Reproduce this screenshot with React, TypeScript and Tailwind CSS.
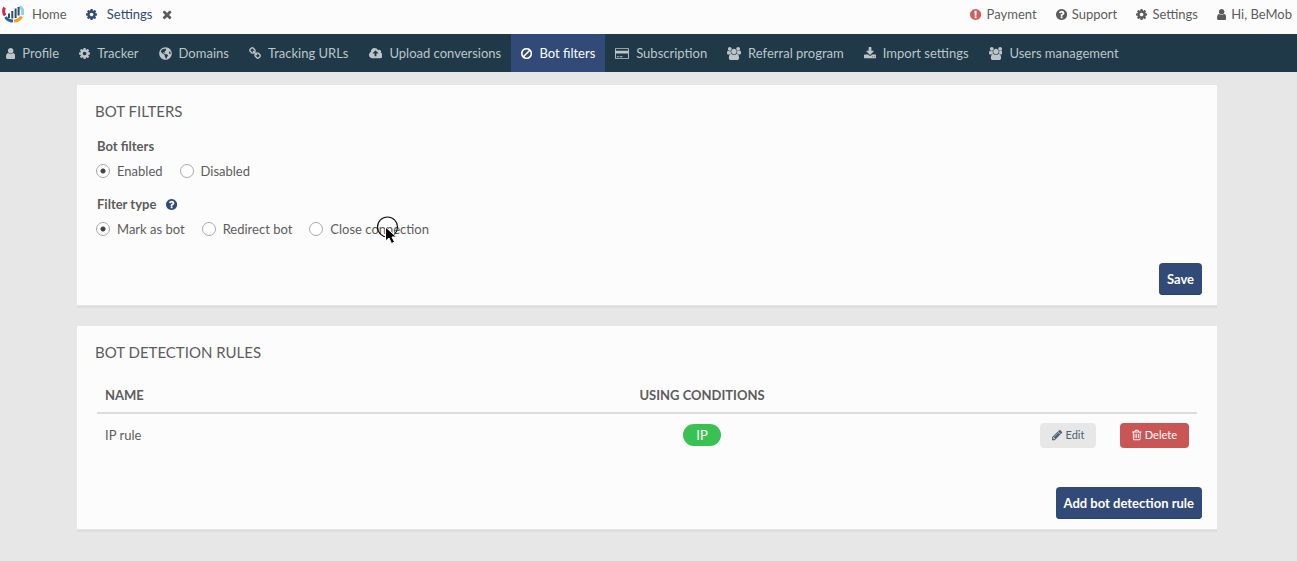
import { useState } from "react"
import type { ReactNode } from "react"
import { FaGlobeAmericas } from "react-icons/fa"

// Glyphs on a 1792-unit em: [viewBox, path]
const glyphs = {
  user: [
    "256 0 1280 1792",
    "M1536 1399q0 109-62.5 187t-150.5 78h-854q-88 0-150.5-78t-62.5-187q0-85 8.5-160.5t31.5-152 58.5-131 94-89 134.5-34.5q131 128 313 128t313-128q76 0 134.5 34.5t94 89 58.5 131 31.5 152 8.5 160.5zm-256-887q0 159-112.5 271.5t-271.5 112.5-271.5-112.5-112.5-271.5 112.5-271.5 271.5-112.5 271.5 112.5 112.5 271.5z",
  ],
  cog: [
    "128 0 1536 1792",
    "M1152 896q0-106-75-181t-181-75-181 75-75 181 75 181 181 75 181-75 75-181zm512-109v222q0 12-8 23t-20 13l-185 28q-19 54-39 91 35 50 107 138 10 12 10 25t-9 23q-27 37-99 108t-94 71q-12 0-26-9l-138-108q-44 23-91 38-16 136-29 186-7 28-36 28h-222q-14 0-24.5-8.5t-11.5-21.5l-28-184q-49-16-90-37l-141 107q-10 9-25 9-14 0-25-11-126-114-165-168-7-10-7-23 0-12 8-23 15-21 51-66.5t54-70.5q-27-50-41-99l-183-27q-13-2-21-12.5t-8-23.5v-222q0-12 8-23t19-13l186-28q14-46 39-92-40-57-107-138-10-12-10-24 0-10 9-23 26-36 98.5-107.5t94.5-71.5q13 0 26 10l138 107q44-23 91-38 16-136 29-186 7-28 36-28h222q14 0 24.5 8.5t11.5 21.5l28 184q49 16 90 37l142-107q9-9 24-9 13 0 25 10 129 119 165 170 7 8 7 22 0 12-8 23-15 21-51 66.5t-54 70.5q26 50 41 98l183 28q13 2 21 12.5t8 23.5z",
  ],
  alert: [
    "128 0 1536 1792",
    "M896 128q209 0 385.5 103t279.5 279.5 103 385.5-103 385.5-279.5 279.5-385.5 103-385.5-103-279.5-279.5-103-385.5 103-385.5 279.5-279.5 385.5-103zm128 1247v-190q0-14-9-23.5t-22-9.5h-192q-13 0-23 10t-10 23v190q0 13 10 23t23 10h192q13 0 22-9.5t9-23.5zm-2-344l18-621q0-12-10-18-10-8-24-8h-220q-14 0-24 8-10 6-10 18l17 621q0 10 10 17.5t24 7.5h185q14 0 23.5-7.5t10.5-17.5z",
  ],
  question: [
    "128 0 1536 1792",
    "M1024 1376v-192q0-14-9-23t-23-9h-192q-14 0-23 9t-9 23v192q0 14 9 23t23 9h192q14 0 23-9t9-23zm256-672q0-88-55.5-163t-138.5-116-170-41q-243 0-371 213-15 24 8 42l132 100q7 6 19 6 16 0 25-12 53-68 86-92 34-24 86-24 48 0 85.5 26t37.5 59q0 38-20 61t-68 45q-63 28-115.5 86.5t-52.5 125.5v36q0 14 9 23t23 9h192q14 0 23-9t9-23q0-19 21.5-49.5t54.5-49.5q32-18 49-28.5t46-35 44.5-48 28-60.5 12.5-81zm384 192q0 209-103 385.5t-279.5 279.5-385.5 103-385.5-103-279.5-279.5-103-385.5 103-385.5 279.5-279.5 385.5-103 385.5 103 279.5 279.5 103 385.5z",
  ],
  times: [
    "192 0 1408 1792",
    "M1490 1322q0 40-28 68l-136 136q-28 28-68 28t-68-28l-294-294-294 294q-28 28-68 28t-68-28l-136-136q-28-28-28-68t28-68l294-294-294-294q-28-28-28-68t28-68l136-136q28-28 68-28t68 28l294 294 294-294q28-28 68-28t68 28l136 136q28 28 28 68t-28 68l-294 294 294 294q28 28 28 68z",
  ],
  ban: [
    "128 0 1536 1792",
    "M1440 893q0-161-87-295l-754 753q137 89 297 89 111 0 211.5-43.5t173.5-116.5 116-174.5 43-212.5zm-999 299l755-754q-135-91-300-91-148 0-273 73t-198 199-73 274q0 162 89 299zm1223-299q0 157-61 300t-163.5 246-245 164-298.5 61-298.5-61-245-164-163.5-246-61-300 61-299.5 163.5-245.5 245-164 298.5-61 298.5 61 245 164 163.5 245.5 61 299.5z",
  ],
  link: [
    "64 0 1664 1792",
    "M1520 1216q0-40-28-68l-208-208q-28-28-68-28-42 0-72 32 3 3 19 18.5t21.5 21.5 15 19 13 25.5 3.5 27.5q0 40-28 68t-68 28q-15 0-27.5-3.5t-25.5-13-19-15-21.5-21.5-18.5-19q-33 31-33 73 0 40 28 68l206 207q27 27 68 27 40 0 68-26l147-146q28-28 28-67zm-703-705q0-40-28-68l-206-207q-28-28-68-28-39 0-68 27l-147 146q-28 28-28 67 0 40 28 68l208 208q27 27 68 27 42 0 72-31-3-3-19-18.5t-21.5-21.5-15-19-13-25.5-3.5-27.5q0-40 28-68t68-28q15 0 27.5 3.5t25.5 13 19 15 21.5 21.5 18.5 19q33-31 33-73zm895 705q0 120-85 203l-147 146q-83 83-203 83-121 0-204-85l-206-207q-83-83-83-203 0-123 88-209l-88-88q-86 88-208 88-120 0-204-84l-208-208q-84-84-84-204t85-203l147-146q83-83 203-83 121 0 204 85l206 207q83 83 83 203 0 123-88 209l88 88q86-88 208-88 120 0 204 84l208 208q84 84 84 204z",
  ],
  upload: [
    "0 0 1920 1792",
    "M1280 864q0-14-9-23l-352-352q-9-9-23-9t-23 9l-351 351q-10 12-10 24 0 14 9 23t23 9h224v352q0 13 9.5 22.5t22.5 9.5h192q13 0 22.5-9.5t9.5-22.5v-352h224q13 0 22.5-9.5t9.5-22.5zm640 288q0 159-112.5 271.5t-271.5 112.5h-1088q-185 0-316.5-131.5t-131.5-316.5q0-130 70-240t188-165q-2-30-2-43 0-212 150-362t362-150q156 0 285.5 87t188.5 231q71-62 166-62 106 0 181 75t75 181q0 76-41 138 130 31 213.5 135.5t83.5 238.5z",
  ],
  card: [
    "0 0 1920 1792",
    "M1760 128q66 0 113 47t47 113v1216q0 66-47 113t-113 47h-1600q-66 0-113-47t-47-113v-1216q0-66 47-113t113-47h1600zm-1600 128q-13 0-22.5 9.5t-9.5 22.5v224h1664v-224q0-13-9.5-22.5t-22.5-9.5h-1600zm1600 1280q13 0 22.5-9.5t9.5-22.5v-608h-1664v608q0 13 9.5 22.5t22.5 9.5h1600zm-1504-128v-128h256v128h-256zm384 0v-128h384v128h-384z",
  ],
  users: [
    "0 0 1920 1792",
    "M593 896q-162 5-265 128h-134q-82 0-138-40.5t-56-118.5q0-353 124-353 6 0 43.5 21t97.5 42.5 119 21.5q67 0 133-23-5 37-5 66 0 159 93 293zm1071 637q0 120-73 189.5t-194 69.5h-874q-121 0-194-69.5t-73-189.5q0-53 3.5-103.5t14-109 26.5-108.5 43-97.5 62-81 85.5-53.5 111.5-20q10 0 43 21.5t73 48 107 48 135 21.5 135-21.5 107-48 73-48 43-21.5q61 0 111.5 20t85.5 53.5 62 81 43 97.5 26.5 108.5 14 109 3.5 103.5zm-1024-1277q0 106-75 181t-181 75-181-75-75-181 75-181 181-75 181 75 75 181zm704 384q0 159-112.5 271.5t-271.5 112.5-271.5-112.5-112.5-271.5 112.5-271.5 271.5-112.5 271.5 112.5 112.5 271.5zm576 225q0 78-56 118.5t-138 40.5h-134q-103-123-265-128 93-134 93-293 0-29-5-66 66 23 133 23 59 0 119-21.5t97.5-42.5 43.5-21q124 0 124 353zm-128-609q0 106-75 181t-181 75-181-75-75-181 75-181 181-75 181 75 75 181z",
  ],
  download: [
    "64 0 1664 1792",
    "M1344 1344q0-26-19-45t-45-19-45 19-19 45 19 45 45 19 45-19 19-45zm256 0q0-26-19-45t-45-19-45 19-19 45 19 45 45 19 45-19 19-45zm128-224v320q0 40-28 68t-68 28h-1472q-40 0-68-28t-28-68v-320q0-40 28-68t68-28h465l135 136q58 56 136 56t136-56l136-136h464q40 0 68 28t28 68zm-325-569q17 41-14 70l-448 448q-18 19-45 19t-45-19l-448-448q-31-29-14-70 17-39 59-39h256v-448q0-26 19-45t45-19h256q26 0 45 19t19 45v448h256q42 0 59 39z",
  ],
  pencil: [
    "128 0 1536 1792",
    "M491 1536l91-91-235-235-91 91v107h128v128h107zm523-928q0-22-22-22-10 0-17 7l-542 542q-7 7-7 17 0 22 22 22 10 0 17-7l542-542q7-7 7-17zm-54-192l416 416-832 832h-416v-416zm683 96q0 53-37 90l-166 166-416-416 166-165q36-38 90-38 53 0 91 38l235 234q37 39 37 91z",
  ],
  trash: [
    "192 0 1408 1792",
    "M704 736v576q0 14-9 23t-23 9h-64q-14 0-23-9t-9-23v-576q0-14 9-23t23-9h64q14 0 23 9t9 23zm256 0v576q0 14-9 23t-23 9h-64q-14 0-23-9t-9-23v-576q0-14 9-23t23-9h64q14 0 23 9t9 23zm256 0v576q0 14-9 23t-23 9h-64q-14 0-23-9t-9-23v-576q0-14 9-23t23-9h64q14 0 23 9t9 23zm128 724v-948h-896v948q0 22 7 40.5t14.5 27 10.5 8.5h832q3 0 10.5-8.5t14.5-27 7-40.5zm-672-1076h448l-48-117q-7-9-17-11h-317q-10 2-17 11zm928 32v64q0 14-9 23t-23 9h-96v948q0 83-47 143.5t-113 60.5h-832q-66 0-113-58.5t-47-141.5v-952h-96q-14 0-23-9t-9-23v-64q0-14 9-23t23-9h309l70-167q15-37 54-63t79-26h320q40 0 79 26t54 63l70 167h309q14 0 23 9t9 23z",
  ],
}

function Icon({ name, className = "h-[13px]" }: { name: keyof typeof glyphs; className?: string }) {
  const [viewBox, d] = glyphs[name]
  return (
    <svg viewBox={viewBox} className={`w-auto shrink-0 ${className}`} fill="currentColor" aria-hidden="true">
      <path d={d} />
    </svg>
  )
}

const navItems: { label: string; icon: keyof typeof glyphs | "globe" }[] = [
  { label: "Profile", icon: "user" },
  { label: "Tracker", icon: "cog" },
  { label: "Domains", icon: "globe" },
  { label: "Tracking URLs", icon: "link" },
  { label: "Upload conversions", icon: "upload" },
  { label: "Bot filters", icon: "ban" },
  { label: "Subscription", icon: "card" },
  { label: "Referral program", icon: "users" },
  { label: "Import settings", icon: "download" },
  { label: "Users management", icon: "users" },
]

export default function App() {
  const [status, setStatus] = useState("Enabled")
  const [filterType, setFilterType] = useState("Mark as bot")

  return (
    <div className="min-h-screen bg-[#e7e7e7] font-['Lato',sans-serif] text-[13px] leading-5 text-[#5c5c5c]">
      <header className="flex h-[34px] items-center justify-between bg-[#fcfcfc] pr-[5px] pb-1.5">
        <div className="flex items-center">
          <a href="#home" className="flex items-center gap-2 pl-0.5">
            <Logo />
            Home
          </a>
          <a href="#settings" className="ml-[19px] flex items-center gap-2.5 text-[#314a77]">
            <Icon name="cog" />
            Settings
          </a>
          <button type="button" aria-label="Close tab" className="ml-2.5">
            <Icon name="times" />
          </button>
        </div>
        <div className="flex items-center gap-[19px]">
          <a href="#payment" className="flex items-center gap-[5px]">
            <span className="text-[#d0605e]"><Icon name="alert" /></span>
            Payment
          </a>
          <a href="#support" className="flex items-center gap-[5px]">
            <Icon name="question" />
            Support
          </a>
          <a href="#account" className="flex items-center gap-[5px]">
            <Icon name="cog" />
            Settings
          </a>
          <a href="#user" className="flex items-center gap-[5px]">
            <Icon name="user" />
            Hi, BeMob
          </a>
        </div>
      </header>

      <nav className="flex h-[38px] overflow-hidden bg-[#1f3948] text-[#bdc5c9]">
        {navItems.map(({ label, icon }) => (
          <a
            key={label}
            href={`#${label.toLowerCase().replace(/ /g, "-")}`}
            className={`flex items-center gap-[7px] whitespace-nowrap px-2.5 first:pl-1.5 ${
              label === "Bot filters" ? "bg-[#314a77] text-white" : ""
            }`}
          >
            {icon === "globe" ? <FaGlobeAmericas size={13} /> : <Icon name={icon} />}
            {label}
          </a>
        ))}
      </nav>

      <main className="mx-auto flex flex-col gap-5 pt-[13px] pr-20 pl-[77px]">
        <Card title="Bot filters">
          <fieldset className="mt-3.5 px-0.5">
            <legend className="font-bold">Bot filters</legend>
            <RadioRow name="status" options={["Enabled", "Disabled"]} value={status} onChange={setStatus} />
          </fieldset>
          <fieldset className="mt-[13px] px-0.5">
            <legend className="flex items-center gap-2.5 font-bold">
              Filter type
              <span className="text-[#314a77]"><Icon name="question" /></span>
            </legend>
            <div className="relative">
              <RadioRow
                name="filter-type"
                options={["Mark as bot", "Redirect bot", "Close connection"]}
                value={filterType}
                onChange={setFilterType}
              />
              <Pointer />
            </div>
          </fieldset>
          <div className="mt-6 flex justify-end">
            <PrimaryButton>Save</PrimaryButton>
          </div>
        </Card>

        <Card title="Bot detection rules">
          <div className="mt-3.5 px-0.5">
            <table className="w-full table-fixed border-collapse">
              <thead>
                <tr className="h-9 border-b-2 border-[#dcdcdc] uppercase">
                  <th scope="col" className="w-[45%] px-2 text-left font-bold">Name</th>
                  <th scope="col" className="w-[20%] px-2 text-center font-bold">Using conditions</th>
                  <th scope="col" aria-label="Actions" />
                </tr>
              </thead>
              <tbody>
                <tr className="h-[43px]">
                  <td className="px-2">IP rule</td>
                  <td className="px-2 text-center">
                    <span className="inline-block rounded-full bg-[#3ac154] px-[13px] py-px text-white">IP</span>
                  </td>
                  <td className="px-2">
                    <div className="flex justify-end gap-6 text-[11px]">
                      <button type="button" className="flex h-[25px] items-center gap-[3px] rounded bg-[#e7e7e7] px-3 text-[#4d6373]">
                        <Icon name="pencil" className="h-3" />
                        Edit
                      </button>
                      <button type="button" className="flex h-[25px] items-center gap-[3px] rounded bg-[#c95655] px-3 text-white">
                        <Icon name="trash" className="h-3" />
                        Delete
                      </button>
                    </div>
                  </td>
                </tr>
              </tbody>
            </table>
          </div>
          <div className="mt-[31px] flex justify-end">
            <PrimaryButton>Add bot detection rule</PrimaryButton>
          </div>
        </Card>
      </main>
    </div>
  )
}

function Card({ title, children }: { title: string; children: ReactNode }) {
  return (
    <section className="border-b border-[#e4e4e4] bg-[#fcfcfc] px-[18px] pt-[15px] pb-2.5 shadow-[0_2px_0_#dcdcdc]">
      <h2 className="text-[15px] leading-[22px] uppercase">{title}</h2>
      {children}
    </section>
  )
}

function RadioRow({
  name,
  options,
  value,
  onChange,
}: {
  name: string
  options: string[]
  value: string
  onChange: (value: string) => void
}) {
  return (
    <div className="mt-[5px] -ml-px flex gap-[17px]">
      {options.map((option) => (
        <label key={option} className="flex items-center gap-[7px]">
          <input
            type="radio"
            name={name}
            checked={value === option}
            onChange={() => onChange(option)}
            className="size-3.5 appearance-none rounded-full border border-[#aaaaaa] bg-white checked:bg-[radial-gradient(circle,#444_2px,transparent_3px)]"
          />
          {option}
        </label>
      ))}
    </div>
  )
}

function PrimaryButton({ children }: { children: ReactNode }) {
  return (
    <button type="button" className="-mr-[3px] h-8 rounded bg-[#314a77] px-2 font-bold text-white shadow-[inset_0_-1px_0_#2b426c]">
      {children}
    </button>
  )
}

// Mouse pointer with its click ring, lying over the last option
function Pointer() {
  return (
    <svg viewBox="0 0 24 30" className="pointer-events-none absolute -top-1 left-[279px] h-[30px] w-6" aria-hidden="true">
      <circle cx="11.5" cy="12" r="10" fill="none" stroke="#111" strokeWidth="1.2" />
      <path d="M9.500 12v14l3.500-3 2.500 5.500 3-1.500-2.500-5h4.500z" fill="#000" stroke="#fff" />
    </svg>
  )
}

function Logo() {
  return (
    <svg viewBox="0 0 22 18" className="h-[18px] w-[22px]" fill="none" aria-hidden="true">
      <path d="M2.500 2.500Q.5 6.500 3 10.500" stroke="#dd2443" strokeWidth="3" />
      <path d="M3.500 12Q6 16 11 16" stroke="#2461a5" strokeWidth="3" />
      <path d="M12 16Q17 16 19.500 11.500" stroke="#f5a019" strokeWidth="3" />
      <path d="M17.500 1.500Q22.500 4.500 20 10" stroke="#91cfe8" strokeWidth="3" />
      <path d="M7 8.500v4.500M10.300 6v7.500M13.600 3.500v9.500M16.600 2v8.500" stroke="#2c5069" strokeWidth="2" />
    </svg>
  )
}
